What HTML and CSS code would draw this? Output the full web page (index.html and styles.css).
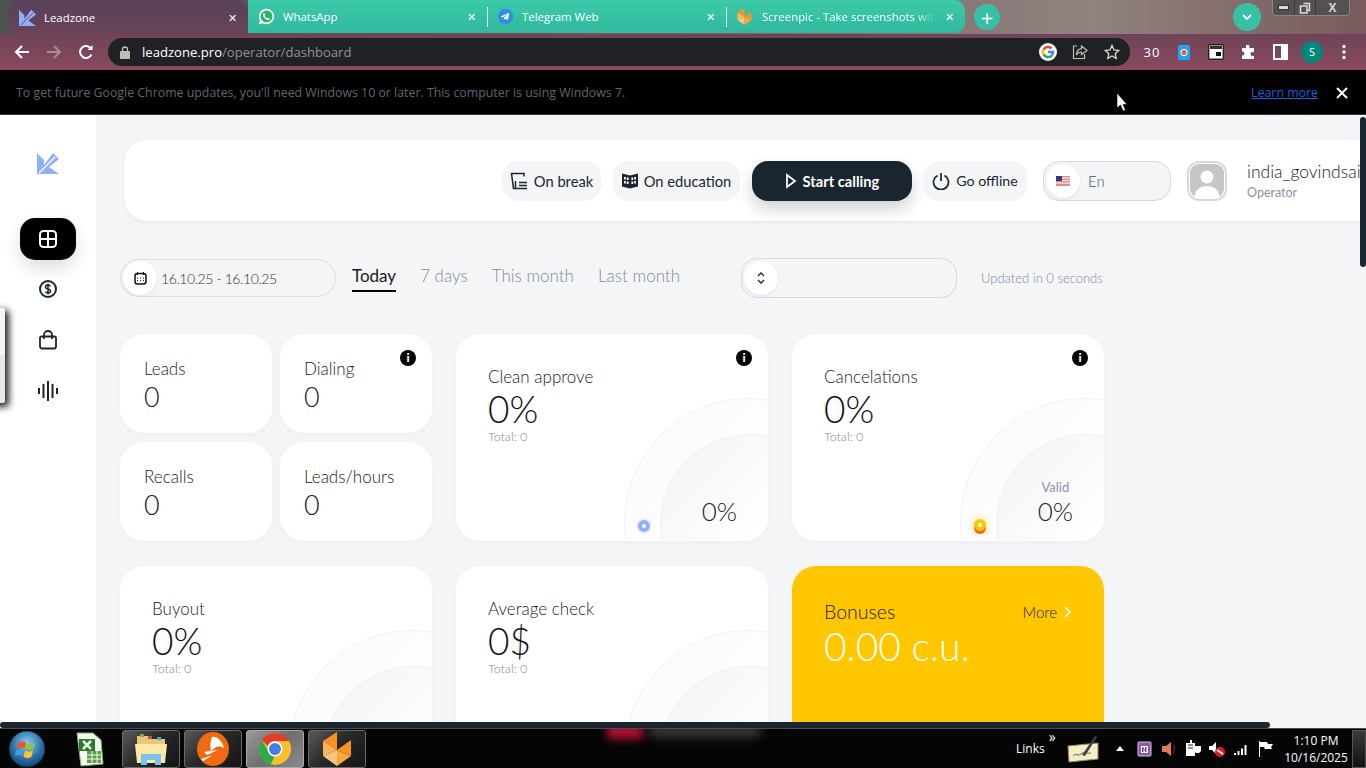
FILE: index.html
```html
<!DOCTYPE html>
<html lang="en">
<head>
    <meta charset="UTF-8">
    <title>Leadzone</title>
    <link rel="stylesheet" href="styles.css">
</head>
<body>
    <!-- Browser tabs -->
    <div class="tabstrip">
        <div class="tab tab_active">
            <svg class="favicon" viewBox="0 0 22 22"><path fill="#8fb0ff" d="M0 1 7 8v5l9-12 6 6-10 8 10 7H0z"/><path stroke="#5a4058" stroke-width="1.200" d="M2 21 18 5"/></svg>
            <span class="tab_name">Leadzone</span>
            <span class="tab_close">&#10005;</span>
        </div>
        <div class="tab">
            <svg class="favicon" viewBox="0 0 20 20"><path fill="#fff" d="M10 1a9 9 0 0 0-7.700 13.600L1 19l4.500-1.200A9 9 0 1 0 10 1z"/><circle cx="10" cy="10" r="7" fill="#25b863"/><path fill="#fff" d="M7 5.500 5.800 7c0 4 3.200 7.200 7.200 7.200l1.300-1.300-2.300-1.500-1 .7C9.500 11.500 8.600 10.500 8 9.200l.8-1z"/></svg>
            <span class="tab_name">WhatsApp</span>
            <span class="tab_close">&#10005;</span>
        </div>
        <div class="tab tab_line">
            <svg class="favicon" viewBox="0 0 20 20"><circle cx="10" cy="10" r="9" fill="#2f8fe6"/><path fill="#fff" d="m4 10 10.500-4.500-1.700 9-3-2.200-1.500 1.500-.3-2.400 4.500-4-5.700 3.400z"/></svg>
            <span class="tab_name">Telegram Web</span>
            <span class="tab_close">&#10005;</span>
        </div>
        <div class="tab tab_line tab_last">
            <svg class="favicon" viewBox="0 0 28 34"><path fill="#f7931e" d="M0 9 14 0v18zM14 18 28 8v16z"/><path fill="#fbb35c" d="m0 9 14 9-14 6z"/><path fill="#fdc47f" d="m0 24 14-6v16z"/><path fill="#f9a63e" d="m14 18 14 6-14 10z"/></svg>
            <span class="tab_name tab_fade">Screenpic - Take screenshots with</span>
            <span class="tab_close">&#10005;</span>
        </div>
        <div class="round_btn new_tab">+</div>
        <div class="round_btn tab_search">
            <svg width="12" height="12" viewBox="0 0 12 12"><path d="m2 4 4 4 4-4" fill="none" stroke="#fff" stroke-width="1.800"/></svg>
        </div>
        <div class="win_buttons">
            <span class="win_btn"><i class="win_min"></i></span>
            <span class="win_btn"><svg width="12" height="12" viewBox="0 0 12 12"><path d="M4.500 1.500h6v7h-2M1.500 4h6.500v7h-6.500z" fill="none" stroke="#ddd" stroke-width="1.500"/></svg></span>
            <span class="win_btn win_close">X</span>
        </div>
    </div>

    <!-- Address bar -->
    <div class="toolbar">
        <div class="tool_icon">
            <svg width="16" height="16" viewBox="0 0 16 16"><path d="M15 8H2M8 2 2 8l6 6" fill="none" stroke="#fff" stroke-width="2"/></svg>
        </div>
        <div class="tool_icon">
            <svg width="16" height="16" viewBox="0 0 16 16"><path d="M1 8h13M8 2l6 6-6 6" fill="none" stroke="#a98a95" stroke-width="2"/></svg>
        </div>
        <div class="tool_icon">
            <svg width="16" height="16" viewBox="0 0 16 16"><path d="M13.500 10.500A6 6 0 1 1 13 4.500" fill="none" stroke="#fff" stroke-width="2"/><path d="M14.500 1v5h-5z" fill="#fff"/></svg>
        </div>
        <div class="omnibox">
            <svg class="lock" width="10" height="13" viewBox="0 0 10 13"><path d="M2.500 5V3.500a2.500 2.500 0 0 1 5 0V5" fill="none" stroke="#bdbdbd" stroke-width="1.300"/><rect y="5" width="10" height="8" rx="1" fill="#bdbdbd"/></svg>
            <span class="url"><b>leadzone.pro</b>/operator/dashboard</span>
            <div class="tool_icon">
                <svg width="18" height="18" viewBox="0 0 18 18"><circle cx="9" cy="9" r="9" fill="#fff"/><g fill="none" stroke-width="2.400"><path stroke="#ea4335" d="M12.600 5.500A5 5 0 0 0 4.600 6.600"/><path stroke="#fbbc05" d="M4.600 6.600a5 5 0 0 0 0 4.800"/><path stroke="#34a853" d="M4.600 11.400a5 5 0 0 0 8 1.200"/><path stroke="#4285f4" d="M12.600 12.600A5 5 0 0 0 14 9H9"/></g></svg>
            </div>
            <div class="tool_icon">
                <svg width="16" height="16" viewBox="0 0 16 16"><path d="M5 2H1.500v12.500h11V10" fill="none" stroke="#bdbdbd" stroke-width="1.200"/><path d="M9.500 2 15 6.500 9.500 10.500V8C7 8 5.500 9 4.500 11c0-4 2-6 5-6.300z" fill="none" stroke="#bdbdbd" stroke-width="1.200"/></svg>
            </div>
            <div class="tool_icon">
                <svg width="16" height="16" viewBox="0 0 16 16"><path d="m8 1.500 2 4.500 4.800.5-3.600 3.200 1 4.800L8 12l-4.200 2.500 1-4.800L1.200 6.500 6 6z" fill="none" stroke="#d8d8d8" stroke-width="1.300"/></svg>
            </div>
        </div>
        <div class="tool_icon tool_count">30</div>
        <div class="tool_icon">
            <svg width="12" height="15" viewBox="0 0 12 15"><rect width="12" height="15" rx="2" fill="#19a7ee"/><circle cx="6" cy="7.500" r="3.500" fill="#fff"/><circle cx="6" cy="7.500" r="2.500" fill="#f4533c"/></svg>
        </div>
        <div class="tool_icon">
            <svg width="16" height="16" viewBox="0 0 16 16"><rect x=".7" y=".7" width="14.600" height="14.600" rx="1" fill="#fff" stroke="#222" stroke-width="1.400"/><rect x="2" y="2" width="12" height="3" fill="#333"/><rect x="8" y="8" width="5" height="4" fill="#111"/></svg>
        </div>
        <div class="tool_icon">
            <svg width="16" height="16" viewBox="0 0 16 16"><path fill="#fff" d="M6 1.500a2 2 0 0 1 3.500 1V4H14v4h-1.500a2 2 0 0 0 0 4H14v3H2v-3.500h.5a2 2 0 0 0 0-4H2V4h4z"/></svg>
        </div>
        <div class="tool_icon">
            <svg width="15" height="16" viewBox="0 0 15 16"><path fill="#fff" d="M0 0h15v16H0zm2 2v12h6V2z" fill-rule="evenodd"/></svg>
        </div>
        <div class="tool_icon"><span class="profile">S</span></div>
        <div class="tool_icon">
            <svg width="4" height="16" viewBox="0 0 4 16"><circle cx="2" cy="2.500" r="1.700" fill="#fff"/><circle cx="2" cy="8" r="1.700" fill="#fff"/><circle cx="2" cy="13.500" r="1.700" fill="#fff"/></svg>
        </div>
    </div>

    <!-- Update notice -->
    <div class="infobar">
        <span class="info_text">To get future Google Chrome updates, you'll need Windows 10 or later. This computer is using Windows 7.</span>
        <a class="info_link">Learn more</a>
        <svg width="12" height="12" viewBox="0 0 12 12"><path d="m1 1 10 10M11 1 1 11" stroke="#fff" stroke-width="2"/></svg>
    </div>

    <!-- Page -->
    <div class="page">
        <div class="sidebar">
            <svg class="logo" width="22" height="22" viewBox="0 0 22 22"><path fill="#8fb0ff" d="M0 1 7 8v5l9-12 6 6-10 8 10 7H0z"/><path stroke="#fff" stroke-width="1.200" d="M2 21 18 5"/></svg>
            <div class="nav_item nav_active">
                <svg width="20" height="20" viewBox="0 0 20 20"><rect x="2" y="2" width="16" height="16" rx="3.500" fill="none" stroke="#fff" stroke-width="2"/><path d="M10 2v16M2 10h16" stroke="#fff" stroke-width="2"/></svg>
            </div>
            <div class="nav_item">
                <svg width="20" height="20" viewBox="0 0 20 20"><circle cx="10" cy="10" r="8" fill="none" stroke="#1b2530" stroke-width="2"/><path d="M12.500 7.500C12 6.500 11 6 10 6 8.500 6 7.500 6.800 7.500 8s1 1.700 2.500 2 2.500.8 2.500 2-1 2-2.500 2c-1 0-2-.5-2.500-1.500M10 4.500v11" fill="none" stroke="#1b2530" stroke-width="1.500"/></svg>
            </div>
            <div class="nav_item">
                <svg width="20" height="20" viewBox="0 0 20 20"><path d="M3.500 6.500h13A1.500 1.500 0 0 1 18 8v8.500a2 2 0 0 1-2 2H4a2 2 0 0 1-2-2V8a1.500 1.500 0 0 1 1.500-1.500z" fill="none" stroke="#1b2530" stroke-width="1.800"/><path d="M6 9V5a4 4 0 0 1 8 0v4" fill="none" stroke="#1b2530" stroke-width="1.800"/></svg>
            </div>
            <div class="nav_item">
                <svg width="20" height="20" viewBox="0 0 20 20"><path d="M1 7v6M5.500 3v14M10 0v20M14.500 3v14M19 7v6" stroke="#1b2530" stroke-width="2"/></svg>
            </div>
        </div>

        <div class="main">
            <!-- Top panel -->
            <div class="top_panel">
                <div class="status_btn btn_break">
                    <svg width="18" height="18" viewBox="0 0 18 18"><path d="M14 4.500V1.500H1.500L3.500 16.500H9M5.500 9v7.500" fill="none" stroke="#1b2530" stroke-width="1.500"/><path d="M9 10.500h8M9 13.500h8M9 16.500h8" stroke="#1b2530" stroke-width="1.500"/></svg>
                    On break
                </div>
                <div class="status_btn btn_edu">
                    <svg width="16" height="17" viewBox="0 0 16 17"><path fill="#1b2530" d="M0 1.500 8 3.500 16 1.500v13l-8 2-8-2z"/><path fill="#fff" d="M2 5h1.800v2.500H2zM4.800 5.500h1.800V8H4.800zM2 9h1.800v2.500H2zM4.800 9.500h1.800V12H4.800zM9.400 5.500h1.800V8H9.400zM12.200 5H14v2.500h-1.800zM9.400 9.500h1.800V12H9.400zM12.200 9H14v2.500h-1.800z"/></svg>
                    On education
                </div>
                <div class="status_btn btn_start">
                    <svg width="12" height="16" viewBox="0 0 12 16"><path d="M2 2v12l8-6z" fill="none" stroke="#fff" stroke-width="1.800"/></svg>
                    Start calling
                </div>
                <div class="status_btn btn_offline">
                    <svg width="18" height="18" viewBox="0 0 18 18"><path d="M5.500 3.500a7.500 7.500 0 1 0 7 0M9 1v8" fill="none" stroke="#1b2530" stroke-width="1.700"/></svg>
                    Go offline
                </div>
                <div class="lang_select">
                    <span class="inner_circle">
                        <svg width="14" height="10" viewBox="0 0 14 10"><path fill="#e6858a" d="M0 0h14v10H0z"/><path fill="#fff" d="M0 1.500h14v1H0zM0 4h14v1H0zM0 6.500h14v1H0z"/><path fill="#27407c" d="M0 0h6v5H0z"/></svg>
                    </span>
                    En
                </div>
                <div class="avatar">
                    <svg width="34" height="34" viewBox="0 0 34 34"><rect width="34" height="34" rx="9" fill="#c6c6c6"/><circle cx="17" cy="13" r="6.500" fill="#fff"/><path d="M4 34c1-8 6-12 13-12s12 4 13 12z" fill="#fff"/></svg>
                </div>
                <div class="user">
                    <div class="user_name">india_govindsaini</div>
                    <div class="user_role">Operator</div>
                </div>
            </div>

            <!-- Period filter -->
            <div class="filters">
                <div class="date_select">
                    <span class="inner_circle">
                        <svg width="13" height="13" viewBox="0 0 13 13"><rect x="1" y="1.500" width="11" height="10.500" rx="2.500" fill="none" stroke="#111" stroke-width="1.500"/><path d="M3.500 0v3M9.500 0v3M3 6h1M6 6h1M9 6h1M3 8.500h1M6 8.500h1M9 8.500h1" stroke="#111"/></svg>
                    </span>
                    16.10.25 - 16.10.25
                </div>
                <div class="periods">
                    <span class="period period_active">Today</span>
                    <span class="period">7 days</span>
                    <span class="period">This month</span>
                    <span class="period">Last month</span>
                </div>
                <div class="empty_select">
                    <span class="inner_circle">
                        <svg width="8" height="12" viewBox="0 0 8 12"><path d="m1 4 3-3 3 3M1 8l3 3 3-3" fill="none" stroke="#1b2530" stroke-width="1.300"/></svg>
                    </span>
                </div>
                <div class="updated">Updated in 0 seconds</div>
            </div>

            <!-- Stat cards -->
            <div class="cards">
                <div class="small_cards">
                    <div class="card small_card">
                        <div class="card_label">Leads</div>
                        <div class="small_value">0</div>
                    </div>
                    <div class="card small_card">
                        <span class="info_dot">i</span>
                        <div class="card_label">Dialing</div>
                        <div class="small_value">0</div>
                    </div>
                    <div class="card small_card">
                        <div class="card_label">Recalls</div>
                        <div class="small_value">0</div>
                    </div>
                    <div class="card small_card">
                        <div class="card_label">Leads/hours</div>
                        <div class="small_value">0</div>
                    </div>
                </div>

                <div class="card big_card">
                    <span class="info_dot">i</span>
                    <div class="card_label">Clean approve</div>
                    <div class="big_value">0%</div>
                    <div class="total">Total: 0</div>
                    <div class="gauge"><div class="gauge_inner"></div></div>
                    <span class="gauge_dot dot_blue"></span>
                    <div class="gauge_text">
                        <div class="gauge_value">0%</div>
                    </div>
                </div>

                <div class="card big_card">
                    <span class="info_dot">i</span>
                    <div class="card_label">Cancelations</div>
                    <div class="big_value">0%</div>
                    <div class="total">Total: 0</div>
                    <div class="gauge"><div class="gauge_inner"></div></div>
                    <span class="gauge_dot dot_yellow"></span>
                    <div class="gauge_text">
                        <div class="gauge_label">Valid</div>
                        <div class="gauge_value">0%</div>
                    </div>
                </div>

                <div class="card big_card">
                    <div class="card_label">Buyout</div>
                    <div class="big_value">0%</div>
                    <div class="total">Total: 0</div>
                    <div class="gauge"><div class="gauge_inner"></div></div>
                </div>

                <div class="card big_card">
                    <div class="card_label">Average check</div>
                    <div class="big_value">0$</div>
                    <div class="total">Total: 0</div>
                    <div class="gauge"><div class="gauge_inner"></div></div>
                </div>

                <div class="card bonus_card">
                    <div class="bonus_head">
                        <span class="bonus_label">Bonuses</span>
                        <span class="bonus_more">More
                            <svg width="8" height="12" viewBox="0 0 8 12"><path d="m2 1 5 5-5 5" fill="none" stroke="#fff" stroke-width="1.600"/></svg>
                        </span>
                    </div>
                    <div class="bonus_value">0.00 c.u.</div>
                </div>
            </div>
        </div>

        <!-- Things lying over the page -->
        <div class="float_widget"></div>
        <div class="scroll_v"></div>
        <div class="scroll_h"></div>
    </div>

    <!-- Windows taskbar -->
    <div class="taskbar">
        <div class="wallpaper_red"></div>
        <div class="wallpaper_gray"></div>
        <svg class="orb" width="38" height="38" viewBox="0 0 38 38">
            <defs><radialGradient id="orbFill" cx=".5" cy=".35" r=".7"><stop offset="0" stop-color="#8fcdf0"/><stop offset=".6" stop-color="#2a6fa8"/><stop offset="1" stop-color="#0d3e66"/></radialGradient></defs>
            <circle cx="19" cy="19" r="18" fill="url(#orbFill)" stroke="#0a2338"/>
            <path fill="#e8562a" d="M10 13c3-2 5-2 8-.5l-1.500 6c-2.500-1.500-5-1.500-8 .5z"/>
            <path fill="#8cc63f" d="M19 13c3 1.500 5 1.500 8 0l-1.500 6c-3 1.500-5 1.500-8 0z"/>
            <path fill="#3f9ce0" d="M8 20.500c3-2 5-2 8-.5l-1.500 6c-2.500-1.500-5-1.500-8 .5z"/>
            <path fill="#f9c32b" d="M17 20.500c3 1.500 5 1.500 8 0L23.500 27c-3 1.500-5 1.500-8 0z"/>
        </svg>
        <svg class="excel" width="32" height="36" viewBox="0 0 32 36">
            <path fill="#f4f8ef" stroke="#7fae6a" d="m4 2 16 0 8 7 2 24-22 2z"/>
            <path fill="#5d9e48" d="M14 20h14v12H14z"/>
            <path stroke="#f4f8ef" d="M14 24h14M14 28h14M19 20v12M24 20v12"/>
            <path fill="#2f7a2f" d="M6 8h16v12H6z"/>
            <path stroke="#e8f0e0" stroke-width="2.500" d="m10 10 8 8M18 10l-8 8"/>
        </svg>
        <div class="task_btn">
            <svg width="32" height="34" viewBox="0 0 32 34"><path fill="#e8c878" d="M2 4h12l2 3h14v6H2z"/><rect x="5" y="2" width="4" height="3" fill="#6ab04c"/><rect x="13" y="4" width="4" height="3" fill="#c0504d"/><rect x="22" y="5" width="4" height="3" fill="#4aa3df"/><path fill="#fbe9a8" d="M0 12h32l-2 19H2z"/><path fill="#7cc4ee" d="M6 22h20v11h-6v-5h-8v5H6z"/></svg>
        </div>
        <div class="task_btn">
            <svg width="32" height="34" viewBox="0 0 32 34"><ellipse cx="16" cy="17" rx="16" ry="17" fill="#f26a0f"/><path fill="#fff" d="M15 5c5-1 10 4 12 11-5-3-10-1-13 4-1-5-1-10 1-15zM7 20l14-2-11 5zM4 27l12-4-10 6z"/></svg>
        </div>
        <div class="task_btn task_active">
            <svg width="32" height="32" viewBox="0 0 32 32"><circle cx="16" cy="16" r="16" fill="#f9c02c"/><path fill="#e33b2e" d="M16 0a16 16 0 0 1 14 8H16a8 8 0 0 0-7.500 5L2.800 7A16 16 0 0 1 16 0z"/><path fill="#2da94f" d="M2.800 7 9.500 19a8 8 0 0 0 6 5l-4 7.500A16 16 0 0 1 2.800 7z"/><circle cx="16" cy="16" r="7.500" fill="#fff"/><circle cx="16" cy="16" r="6" fill="#3f7fe8"/></svg>
        </div>
        <div class="task_btn">
            <svg width="28" height="34" viewBox="0 0 28 34"><path fill="#f7931e" d="M0 9 14 0v18zM14 18 28 8v16z"/><path fill="#fbb35c" d="m0 9 14 9-14 6z"/><path fill="#fdc47f" d="m0 24 14-6v16z"/><path fill="#f9a63e" d="m14 18 14 6-14 10z"/></svg>
        </div>

        <div class="tray">
            <span class="tray_links">Links</span>
            <span class="tray_more">&raquo;</span>
            <svg class="tray_pen" width="32" height="30" viewBox="0 0 32 30"><path fill="#f5eec2" stroke="#8c8c70" d="m1 12 30-3v16L2 28z"/><path d="M6 22c3-4 5 1 8-2s6 0 10-1" fill="none" stroke="#666"/><path d="M15 21 28 2l2 1-12 19z" fill="#39424e"/></svg>
            <span class="tray_up"></span>
            <span class="tray_icon">
                <svg width="16" height="16" viewBox="0 0 16 16"><rect x="1" y="1" width="13" height="14" rx="1" fill="#8c5aa6" stroke="#d7c4e0"/><path fill="#fff" d="M4 5h7v7H4z"/><path fill="#7a3d96" d="M5 11V6h1l2 3V6h1.500v5h-1l-2-3v3z"/></svg>
            </span>
            <span class="tray_icon">
                <svg width="16" height="16" viewBox="0 0 16 16"><path fill="#e07b5a" d="M1 5h4l5-4v14l-5-4H1z"/><path d="M12 4c2 2 2 6 0 8" fill="none" stroke="#5a2a1c" stroke-width="1.300"/></svg>
            </span>
            <span class="tray_icon">
                <svg width="16" height="17" viewBox="0 0 16 17"><rect x="1" y="3" width="9" height="13" fill="#fff"/><path d="M3 5h5M3 8h5" stroke="#222"/><path fill="#fff" d="M5 0h2v3H5zM9 6h7v5l-2 2h-3L9 11z"/></svg>
            </span>
            <span class="tray_icon">
                <svg width="18" height="16" viewBox="0 0 18 16"><path fill="#fff" d="M1 5h3l4-4v12L4 9H1z"/><circle cx="12" cy="11" r="5" fill="#e11b22"/><path d="m9 9 6 4" stroke="#fff" stroke-width="1.800"/></svg>
            </span>
            <span class="tray_icon">
                <svg width="16" height="14" viewBox="0 0 16 14"><path fill="#fff" d="M1 11h2v2H1zM4.500 9h2v4h-2zM8 6.500h2V13H8zM11.500 3h2v10h-2z"/></svg>
            </span>
            <span class="tray_icon">
                <svg width="15" height="16" viewBox="0 0 15 16"><path d="M1.500 0v16" stroke="#fff"/><path fill="#fff" d="M2 1h7l1 2h5l-2 3 1 2H7L6 6H2z"/></svg>
            </span>
            <div class="clock">
                <div>1:10 PM</div>
                <div>10/16/2025</div>
            </div>
            <span class="show_desktop"></span>
        </div>
    </div>

    <!-- Mouse pointer -->
    <svg class="pointer" width="12" height="18" viewBox="0 0 12 18"><path fill="#fff" stroke="#000" stroke-width=".6" d="M1 0v15l3.500-3 2.500 6 2.500-1-2.500-5.500H11z"/></svg>
</body>
</html>
```

FILE: styles.css
```css
/* General styles for body */
html,
body {
    margin: 0;
    padding: 0;
    height: 768px;
    overflow: hidden;
}

body {
    width: 1366px;
    display: flex;
    flex-direction: column;
    position: relative;
    font-family: "Lato", sans-serif;
    background: #000;
}

/* Browser tabs */
.tabstrip {
    height: 34px;
    display: flex;
    padding-left: 9px;
    background: linear-gradient(90deg, #4b534f 0%, #6b5b5c 40%, #8f827f 80%, #7a5a5c 100%);
    font-family: "Open Sans", sans-serif;
    flex-shrink: 0;
}

.tab {
    width: 239px;
    height: 33px;
    display: flex;
    align-items: center;
    padding: 0 10px;
    box-sizing: border-box;
    background: linear-gradient(180deg, #3ccaaa 0%, #30b89c 100%);
    color: #fff;
    font-size: 11.4px;
    position: relative;
    flex-shrink: 0;
}

.tab_active {
    height: 34px;
    border-radius: 10px 10px 0 0;
    background: linear-gradient(180deg, #564259 0%, #6b4358 100%);
}

.tab_line::before {
    content: "";
    position: absolute;
    left: 0;
    top: 7px;
    height: 20px;
    width: 1px;
    background: #e6f7f3;
}

.tab_last {
    border-radius: 0 10px 10px 0;
}

.favicon {
    width: 17px;
    height: 17px;
    flex-shrink: 0;
}

.tab_name {
    margin-left: 8px;
    flex: 1;
    min-width: 0;
    white-space: nowrap;
    overflow: hidden;
}

.tab_fade {
    margin-left: 9px;
    -webkit-mask-image: linear-gradient(90deg, #000 88%, transparent 100%);
    mask-image: linear-gradient(90deg, #000 88%, transparent 100%);
}

.tab_close {
    font-size: 11px;
    width: 14px;
    margin-left: 6px;
    margin-right: -1px;
    text-align: center;
    flex-shrink: 0;
}

.round_btn {
    display: flex;
    align-items: center;
    justify-content: center;
    background: #37c0a3;
    color: #fff;
    border-radius: 50%;
    flex-shrink: 0;
}

.new_tab {
    width: 26px;
    height: 26px;
    margin: 4px 0 0 9px;
    font-size: 22px;
    line-height: 26px;
}

.tab_search {
    width: 28px;
    height: 28px;
    margin: 3px 0 0 233px;
}

.win_buttons {
    display: flex;
    width: 78px;
    height: 16px;
    margin-left: 11px;
    background: #565151;
    border: 1px solid #8a8583;
    border-top: none;
    border-radius: 0 0 4px 4px;
    box-sizing: border-box;
}

.win_btn {
    flex: 1;
    display: flex;
    align-items: center;
    justify-content: center;
    border-right: 1px solid #3e3a3a;
    font-size: 12px;
}

.win_close {
    flex: 1.6;
    border-right: none;
    color: #d4d4d4;
    font-weight: bold;
}

.win_min {
    display: block;
    width: 9px;
    height: 3px;
    background: #ddd;
    border: 1px solid #333;
}

/* Address bar */
.toolbar {
    height: 36px;
    display: flex;
    align-items: center;
    padding-left: 6px;
    background: linear-gradient(180deg, #6e4358 0%, #8a4a5e 100%);
    flex-shrink: 0;
}

.tool_icon {
    width: 32px;
    height: 28px;
    display: flex;
    align-items: center;
    justify-content: center;
    flex-shrink: 0;
}

.tool_count {
    color: #fff;
    font-family: "Open Sans", sans-serif;
    font-size: 13px;
    letter-spacing: 1px;
}

.omnibox {
    width: 1022px;
    height: 28px;
    margin: 0 6px;
    padding: 0 2px 0 12px;
    box-sizing: border-box;
    display: flex;
    align-items: center;
    background: #202124;
    border-radius: 14px;
}

.url {
    flex: 1;
    margin-left: 12px;
    font-family: "Open Sans", sans-serif;
    font-size: 13.1px;
    color: #8f9296;
}

.url b {
    font-weight: 400;
    color: #fff;
}

.profile {
    width: 22px;
    height: 22px;
    border-radius: 50%;
    background: #00897b;
    color: #fff;
    font-family: "Open Sans", sans-serif;
    font-size: 11px;
    line-height: 22px;
    text-align: center;
}

/* Update notice */
.infobar {
    height: 45px;
    display: flex;
    align-items: center;
    padding: 1px 18px 0 16px;
    background: #000;
    font-family: "Open Sans", sans-serif;
    font-size: 12.35px;
    flex-shrink: 0;
    box-sizing: border-box;
    border-bottom: 1px solid #333;
}

.info_text {
    flex: 1;
    color: #5d6772;
}

.info_link {
    color: #1a5fe0;
    text-decoration: underline;
    margin-right: 18px;
}

/* Page */
.page {
    height: 613px;
    display: flex;
    position: relative;
    overflow: hidden;
    flex-shrink: 0;
    background: #f4f5f7;
}

.sidebar {
    width: 96px;
    background: #fff;
    display: flex;
    flex-direction: column;
    align-items: center;
    padding-top: 37px;
    box-sizing: border-box;
    flex-shrink: 0;
}

.logo {
    margin-bottom: 44px;
}

.nav_item {
    width: 56px;
    height: 42px;
    margin-bottom: 9px;
    display: flex;
    align-items: center;
    justify-content: center;
    border-radius: 15px;
}

.nav_active {
    margin-bottom: 8px;
    background: #000;
    box-shadow: 0 8px 16px rgba(27, 37, 48, 0.15);
}

.main {
    flex: 1;
    min-width: 0;
    padding: 25px 0 0 24px;
}

.top_panel {
    width: 1290px;
    height: 81px;
    margin-left: 4px;
    padding-left: 378px;
    box-sizing: border-box;
    display: flex;
    align-items: center;
    background: #fff;
    border-radius: 24px;
    box-shadow: 0 2px 4px rgba(27, 37, 48, 0.05);
}

.status_btn {
    height: 40px;
    display: flex;
    align-items: center;
    justify-content: center;
    gap: 6px;
    border-radius: 16px;
    background: #f4f5f7;
    color: #1b2530;
    font-size: 14.7px;
    box-sizing: border-box;
    white-space: nowrap;
    flex-shrink: 0;
}

.btn_break {
    width: 99px;
    margin-right: 12px;
}

.btn_edu {
    width: 127px;
    margin-right: 12px;
}

.btn_start {
    width: 160px;
    margin-right: 11px;
    background: #1b2530;
    color: #fff;
    font-weight: 700;
    box-shadow: 0 8px 16px rgba(27, 37, 48, 0.2);
}

.btn_offline {
    width: 104px;
    margin-right: 16px;
    font-size: 14.2px;
}

.lang_select,
.date_select,
.empty_select {
    display: flex;
    align-items: center;
    box-sizing: border-box;
    background: #f4f5f7;
    flex-shrink: 0;
}

.lang_select {
    width: 128px;
    height: 40px;
    gap: 8px;
    padding-left: 2px;
    margin-right: 16px;
    border: 1px solid #cfdbe6;
    border-radius: 16px;
    color: #4a5460;
    font-size: 15px;
    font-weight: 300;
}

.inner_circle {
    width: 34px;
    height: 34px;
    display: flex;
    align-items: center;
    justify-content: center;
    background: #fff;
    border-radius: 50%;
    flex-shrink: 0;
    box-shadow: 0 1px 3px rgba(27, 37, 48, 0.1);
}

.avatar {
    width: 40px;
    height: 40px;
    margin-right: 20px;
    box-sizing: border-box;
    border: 2px solid #cfdbe6;
    border-radius: 12px;
    display: flex;
    align-items: center;
    justify-content: center;
    overflow: hidden;
    flex-shrink: 0;
}

.user_name {
    font-size: 17.5px;
    font-weight: 300;
    color: #222;
    white-space: nowrap;
    line-height: 20px;
}

.user_role {
    margin-top: 3px;
    font-size: 12.5px;
    color: #8a94a0;
}

/* Period filter */
.filters {
    height: 40px;
    margin-top: 37px;
    display: flex;
    align-items: center;
}

.date_select {
    width: 216px;
    height: 38px;
    gap: 4px;
    padding-left: 2px;
    border: 1px solid #d8dfe6;
    border-radius: 19px;
    color: #333;
    font-size: 14px;
    letter-spacing: -0.4px;
    font-weight: 300;
}

.periods {
    display: flex;
    width: 389px;
    gap: 24px;
    margin-left: 16px;
}

.period {
    color: #828c98;
    font-size: 17px;
    font-weight: 300;
    padding-bottom: 4px;
    border-bottom: 2px solid transparent;
}

.period_active {
    color: #1a1a1a;
    font-weight: 400;
    border-bottom-color: #000;
}

.empty_select {
    width: 216px;
    height: 40px;
    padding-left: 2px;
    border: 1px solid #cfdbe6;
    border-radius: 16px;
}

.updated {
    margin-left: 24px;
    color: #828c98;
    font-size: 13px;
    font-weight: 300;
}

/* Stat cards */
.cards {
    width: 984px;
    margin-top: 36px;
    display: grid;
    grid-template-columns: 312px 312px 312px;
    grid-auto-rows: 207px;
    gap: 25px 24px;
}

.small_cards {
    display: grid;
    grid-template-columns: 152px 152px;
    grid-template-rows: 99px 99px;
    gap: 9px 8px;
}

.card {
    position: relative;
    overflow: hidden;
    background: #fff;
    border-radius: 24px;
    box-shadow: 0 2px 6px rgba(27, 37, 48, 0.03);
    box-sizing: border-box;
}

.small_card {
    padding: 25px 24px 0;
}

.big_card {
    padding: 33px 32px 0;
}

.card_label {
    font-size: 17px;
    font-weight: 300;
    color: #222;
    line-height: 20px;
}

.small_value {
    margin-top: 1px;
    font-size: 27px;
    font-weight: 300;
    color: #222;
    line-height: 34px;
}

.big_value {
    margin-top: 1px;
    font-size: 37px;
    font-weight: 300;
    color: #111;
    line-height: 42px;
}

.total {
    margin-top: -1px;
    font-size: 12.5px;
    font-weight: 300;
    color: #7d8793;
    line-height: 16px;
}

.info_dot {
    position: absolute;
    top: 16px;
    right: 16px;
    width: 16px;
    height: 16px;
    background: #000;
    color: #fff;
    border-radius: 50%;
    font-size: 12px;
    font-weight: 900;
    line-height: 16px;
    text-align: center;
}

.gauge {
    position: absolute;
    left: 168px;
    top: 64px;
    width: 250px;
    height: 250px;
    box-sizing: border-box;
    border: 1px solid #f0f1f3;
    border-radius: 50%;
    background: linear-gradient(135deg, #fafafb 0%, #fff 50%);
}

.gauge_inner {
    width: 178px;
    height: 178px;
    margin: 35px;
    border-radius: 50%;
    border: 1px solid #f0f1f3;
    box-sizing: border-box;
    background: linear-gradient(135deg, #f1f2f4 0%, #fff 55%);
}

.gauge_dot {
    position: absolute;
    top: 186px;
    left: 182px;
    width: 12px;
    height: 12px;
    box-sizing: border-box;
    border: 4px solid #8fb0ff;
    background: #fff;
    border-radius: 50%;
    box-shadow: 0 0 0 2px rgba(143, 176, 255, 0.15);
}

.dot_yellow {
    top: 185px;
    border-color: #ffc700;
    box-shadow: 0 3px 0 #f06a1d, 0 0 6px 4px rgba(255, 199, 0, 0.2);
}

.gauge_text {
    position: absolute;
    right: 31px;
    bottom: 15px;
    text-align: right;
}

.gauge_label {
    font-size: 13px;
    color: #8a94a0;
    text-align: center;
    margin-bottom: 1px;
}

.gauge_value {
    font-size: 26px;
    font-weight: 300;
    color: #1b2530;
    line-height: 30px;
}

.bonus_card {
    padding: 34px 32px 0;
    background: #ffc700;
}

.bonus_head {
    display: flex;
    justify-content: space-between;
    align-items: center;
}

.bonus_label {
    font-size: 19.5px;
    font-weight: 300;
    color: #222;
}

.bonus_more {
    font-size: 15px;
    font-weight: 300;
    color: #222;
    display: flex;
    align-items: center;
    gap: 6px;
    margin-right: 1px;
}

.bonus_value {
    margin-top: 0;
    font-size: 39px;
    font-weight: 300;
    color: #fff;
    line-height: 46px;
}

/* Things lying over the page */
.float_widget {
    position: absolute;
    left: -10px;
    top: 193px;
    width: 15px;
    height: 95px;
    border-radius: 3px;
    background: linear-gradient(180deg, #f2f6f7 0%, #f2f6f7 50%, #e2eaed 50%);
    box-shadow: 3px 3px 7px 1px rgba(0, 0, 0, 0.85);
}

.scroll_v {
    position: absolute;
    right: 0;
    top: 2px;
    width: 6px;
    height: 150px;
    background: #1a2530;
    border-radius: 3px;
}

.scroll_h {
    position: absolute;
    left: 0;
    bottom: 0;
    width: 1270px;
    height: 6px;
    background: #1a2530;
    border-radius: 3px;
}

/* Windows taskbar */
.taskbar {
    height: 40px;
    position: relative;
    display: flex;
    align-items: center;
    background: #050505;
    border-top: 1px solid #4a4c4e;
    box-sizing: border-box;
    flex-shrink: 0;
    overflow: hidden;
}

.wallpaper_red {
    position: absolute;
    left: 607px;
    top: -6px;
    width: 36px;
    height: 16px;
    background: #b01030;
    filter: blur(4px);
}

.wallpaper_gray {
    position: absolute;
    left: 650px;
    top: -4px;
    width: 110px;
    height: 12px;
    background: #3a3a3a;
    filter: blur(5px);
}

.orb {
    margin-left: 8px;
    position: relative;
    flex-shrink: 0;
}

.excel {
    margin-left: 27px;
    margin-right: 17px;
    flex-shrink: 0;
}

.task_btn {
    width: 58px;
    height: 38px;
    margin-right: 4px;
    display: flex;
    align-items: center;
    justify-content: center;
    box-sizing: border-box;
    border: 1px solid #6a6a6a;
    border-radius: 3px;
    background: linear-gradient(135deg, #5a5a5a 0%, #2a2a2a 45%, #141414 100%);
    flex-shrink: 0;
}

.task_active {
    background: linear-gradient(135deg, #9a9a9a 0%, #6e6e6e 50%, #8a8a8a 100%);
    border-color: #aaa;
}

.tray {
    position: absolute;
    left: 1016px;
    right: 0;
    top: 0;
    height: 39px;
    display: flex;
    align-items: center;
    color: #fff;
    font-family: "Open Sans", sans-serif;
    font-size: 12px;
}

.tray_links {
    width: 36px;
}

.tray_more {
    width: 20px;
    align-self: flex-start;
    font-size: 14px;
    line-height: 16px;
}

.tray_pen {
    flex-shrink: 0;
}

.tray_up {
    width: 0;
    height: 0;
    margin: 0 9px 0 17px;
    border: 4px solid transparent;
    border-top: none;
    border-bottom: 5px solid #fff;
}

.tray_icon {
    width: 24px;
    display: flex;
    justify-content: center;
    flex-shrink: 0;
}

.clock {
    width: 72px;
    margin-left: 3px;
    text-align: center;
    line-height: 17px;
    flex-shrink: 0;
}

.show_desktop {
    width: 14px;
    height: 38px;
    box-sizing: border-box;
    border: 1px solid #555;
    background: linear-gradient(180deg, #3a3a3a, #111);
    flex-shrink: 0;
}

/* Mouse pointer */
.pointer {
    position: absolute;
    left: 1116px;
    top: 93px;
}
```
